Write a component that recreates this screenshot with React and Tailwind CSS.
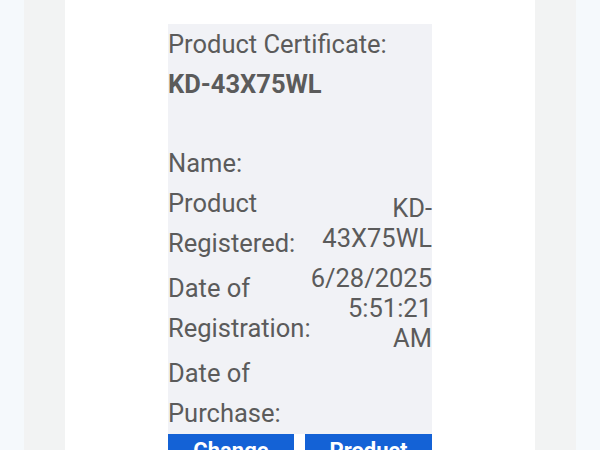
const rows = [
    { label: "Name:", value: "" },
    { label: "Product Registered:", value: "KD-43X75WL" },
    { label: "Date of Registration:", value: "6/28/2025 5:51:21 AM" },
    { label: "Date of Purchase:", value: "" },
];

const App = () => {
    return (
        <div
            className="flex h-[450px] w-[600px] overflow-hidden bg-[#f5f9fc]"
            style={{ fontFamily: "Roboto, 'Liberation Sans', sans-serif" }}
        >
            <div className="w-[24px] shrink-0" />
            <div className="w-[41px] shrink-0 bg-[#f2f3f3]" />

            <div className="flex-1 bg-white">
                <div className="mx-auto mt-[24px] w-[264px] bg-[#f1f2f6] text-[25.5px] text-[#5b5b5b]">
                    <div className="leading-[40px]">Product Certificate:</div>
                    <div className="font-bold leading-[40px]">KD-43X75WL</div>
                    <div className="h-[39px]" />

                    <div className="grid grid-cols-[141px_123px]">
                        {rows.map((row) => (
                            <div key={row.label} className="contents">
                                <div className="self-center whitespace-normal leading-[40px]">{row.label}</div>
                                <div className="self-center text-right leading-[30px]">
                                    {row.value}
                                </div>
                            </div>
                        ))}
                    </div>

                    <div className="mt-[1px] flex gap-[11px] bg-white">
                        <button className="flex h-[60px] w-[126px] items-start justify-center bg-[#1462d6] pt-[4px] text-[22px] font-bold leading-[26px] text-white">
                            Change
                        </button>
                        <button className="flex h-[60px] w-[127px] items-start justify-center bg-[#1462d6] pt-[4px] text-[22px] font-bold leading-[26px] text-white">
                            Product
                        </button>
                    </div>
                </div>
            </div>

            <div className="w-[41px] shrink-0 bg-[#f2f3f3]" />
            <div className="w-[24px] shrink-0" />
        </div>
    );
};

export default App;
